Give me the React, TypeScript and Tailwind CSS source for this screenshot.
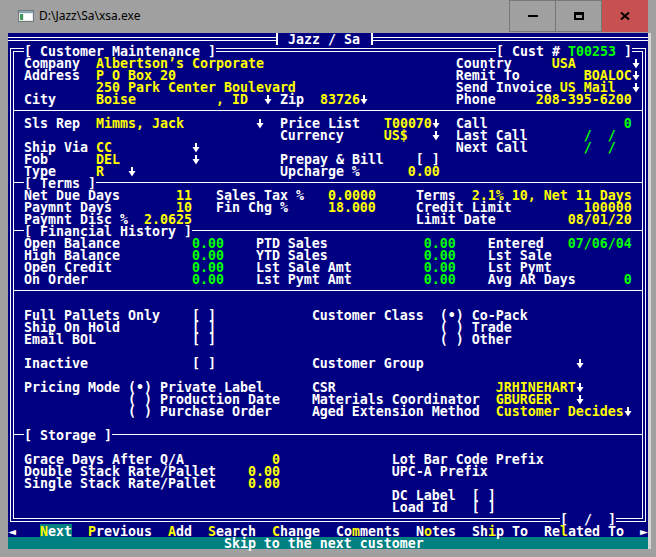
import React from "react";

type C = "w" | "y" | "g";
type Seg = [number, string, C];

const COLOR: Record<C, string> = {
  w: "text-white",
  y: "text-[#ffff00]",
  g: "text-[#00ff00]",
};

function Arrow() {
  return (
    <svg width="8" height="12" viewBox="0 0 8 12" className="inline-block align-top">
      <rect x="3" y="1" width="2" height="6" fill="white" />
      <polygon points="0.5,5 7.5,5 4,10.5" fill="white" />
    </svg>
  );
}

function Line({ segs, start = 1 }: { segs: Seg[]; start?: number }) {
  const out: React.ReactNode[] = [];
  let col = start;
  segs.forEach(([c, t, k], i) => {
    if (c > col) {
      out.push(" ".repeat(c - col));
      col = c;
    }
    if (t === "↓") {
      out.push(<Arrow key={i} />);
    } else {
      out.push(
        <span key={i} className={COLOR[k]}>
          {t}
        </span>
      );
    }
    col += Array.from(t).length;
  });
  return <div className="h-3 whitespace-pre pl-[2px] pt-px leading-[12px]">{out}</div>;
}

function Divider({ label }: { label?: string }) {
  return (
    <div className="flex h-3">
      <div className="mt-[5px] h-px w-[10px] bg-white" />
      {label && <span className="whitespace-pre pt-px leading-[12px] text-white">{label}</span>}
      <div className="mt-[5px] h-px flex-1 bg-white" />
    </div>
  );
}

const Blank = () => <div className="h-3" />;

const rows: (Seg[] | { div: string } | null)[] = [
  [[2, "Company", "w"], [11, "Albertson’s Corporate", "y"], [56, "Country", "w"], [68, "USA", "y"], [78, "↓", "w"]],
  [[2, "Address", "w"], [11, "P O Box 20", "y"], [56, "Remit To", "w"], [72, "BOALOC", "y"], [78, "↓", "w"]],
  [[11, "250 Park Center Boulevard", "y"], [56, "Send Invoice", "w"], [69, "US Mail", "y"], [78, "↓", "w"]],
  [[2, "City", "w"], [11, "Boise", "y"], [26, ", ID", "y"], [32, "↓", "w"], [34, "Zip", "w"], [39, "83726", "y"], [44, "↓", "w"], [56, "Phone", "w"], [66, "208-395-6200", "y"]],
  { div: "" },
  [[2, "Sls Rep", "w"], [11, "Mimms, Jack", "y"], [31, "↓", "w"], [34, "Price List", "w"], [47, "T00070", "y"], [53, "↓", "w"], [56, "Call", "w"], [77, "0", "g"]],
  [[34, "Currency", "w"], [47, "US$", "y"], [53, "↓", "w"], [56, "Last Call", "w"], [72, "/", "g"], [75, "/", "g"]],
  [[2, "Ship Via", "w"], [11, "CC", "y"], [23, "↓", "w"], [56, "Next Call", "w"], [72, "/", "g"], [75, "/", "g"]],
  [[2, "Fob", "w"], [11, "DEL", "y"], [23, "↓", "w"], [34, "Prepay & Bill", "w"], [51, "[ ]", "w"]],
  [[2, "Type", "w"], [11, "R", "y"], [15, "↓", "w"], [34, "Upcharge %", "w"], [50, "0.00", "y"]],
  { div: "[ Terms ]" },
  [[2, "Net Due Days", "w"], [21, "11", "y"], [26, "Sales Tax %", "w"], [40, "0.0000", "y"], [51, "Terms", "w"], [58, "2.1% 10, Net 11 Days", "y"]],
  [[2, "Paymnt Days", "w"], [21, "10", "y"], [26, "Fin Chg %", "w"], [40, "18.000", "y"], [51, "Credit Limit", "w"], [72, "100000", "y"]],
  [[2, "Paymnt Disc %", "w"], [17, "2.0625", "y"], [51, "Limit Date", "w"], [70, "08/01/20", "y"]],
  { div: "[ Financial History ]" },
  [[2, "Open Balance", "w"], [23, "0.00", "g"], [31, "PTD Sales", "w"], [52, "0.00", "g"], [60, "Entered", "w"], [70, "07/06/04", "g"]],
  [[2, "High Balance", "w"], [23, "0.00", "g"], [31, "YTD Sales", "w"], [52, "0.00", "g"], [60, "Lst Sale", "w"]],
  [[2, "Open Credit", "w"], [23, "0.00", "g"], [31, "Lst Sale Amt", "w"], [52, "0.00", "g"], [60, "Lst Pymt", "w"]],
  [[2, "On Order", "w"], [23, "0.00", "g"], [31, "Lst Pymt Amt", "w"], [52, "0.00", "g"], [60, "Avg AR Days", "w"], [77, "0", "g"]],
  { div: "" },
  null,
  [[2, "Full Pallets Only", "w"], [23, "[ ]", "w"], [38, "Customer Class", "w"], [54, "(•) Co-Pack", "w"]],
  [[2, "Ship On Hold", "w"], [23, "[ ]", "w"], [54, "( ) Trade", "w"]],
  [[2, "Email BOL", "w"], [23, "[ ]", "w"], [54, "( ) Other", "w"]],
  null,
  [[2, "Inactive", "w"], [23, "[ ]", "w"], [38, "Customer Group", "w"], [71, "↓", "w"]],
  null,
  [[2, "Pricing Mode", "w"], [15, "(•) Private Label", "w"], [38, "CSR", "w"], [61, "JRHINEHART", "y"], [71, "↓", "w"]],
  [[15, "( ) Production Date", "w"], [38, "Materials Coordinator", "w"], [61, "GBURGER", "y"], [71, "↓", "w"]],
  [[15, "( ) Purchase Order", "w"], [38, "Aged Extension Method", "w"], [61, "Customer Decides", "y"], [77, "↓", "w"]],
  null,
  { div: "[ Storage ]" },
  null,
  [[2, "Grace Days After Q/A", "w"], [33, "0", "y"], [48, "Lot Bar Code Prefix", "w"]],
  [[2, "Double Stack Rate/Pallet", "w"], [30, "0.00", "y"], [48, "UPC-A Prefix", "w"]],
  [[2, "Single Stack Rate/Pallet", "w"], [30, "0.00", "y"]],
  [[48, "DC Label", "w"], [58, "[ ]", "w"]],
  [[48, "Load Id", "w"], [58, "[ ]", "w"]],
];

function DoubleH({ top }: { top: string }) {
  return <div className={`h-[4px] flex-1 border-y border-white ${top}`} />;
}

const Y = "text-[#ffff00]";

export default function App() {
  return (
    <div className="flex h-[557px] w-[656px] flex-col bg-[#a0a0a0] font-['Noto_Sans',sans-serif]">
      {/* title bar */}
      <div className="flex h-[33px] items-start">
        <div className="flex h-[32px] flex-1 items-center pl-[18px]">
          <svg width="16" height="12" viewBox="0 0 16 12" className="mr-[5px]">
            <rect x="0.5" y="0.5" width="15" height="11" fill="#e8e8e8" stroke="#6d7b80" />
            <rect x="1" y="1" width="14" height="2" fill="#8aa4b0" />
            <rect x="2" y="4" width="3" height="6" fill="#3f9a5a" />
            <rect x="6" y="4" width="8" height="6" fill="#ffffff" />
          </svg>
          <span className="text-[12px] leading-none text-black">D:\Jazz\Sa\xsa.exe</span>
        </div>
        <div className="flex h-[32px] w-[47px] items-center justify-center border border-[#777777]">
          <div className="h-[2px] w-[10px] bg-black" />
        </div>
        <div className="flex h-[32px] w-[46px] items-center justify-center border-y border-r border-[#777777]">
          <div className="h-[8px] w-[10px] border-[2px] border-black border-t-[3px]" />
        </div>
        <div className="flex h-[32px] w-[46px] items-center justify-center bg-[#c75050]">
          <svg width="10" height="8" viewBox="0 0 10 8">
            <path d="M1 0.5 L9 7.5 M9 0.5 L1 7.5" stroke="black" strokeWidth="2" />
          </svg>
        </div>
        <div className="w-[8px]" />
      </div>

      <div className="flex">
        {/* console */}
        <div className="ml-[8px] w-[640px] bg-[#000080] text-[13.29px] font-bold text-white font-['DejaVu_Sans_Mono',monospace]">
          {/* row 0 */}
          <div className="flex h-3">
            <div className="mt-[4px] h-[4px] w-[268px] border-y border-white" />
            <div className="h-3 w-[2px] bg-white" />
            <span className="whitespace-pre pl-[10px] pr-[11px] pt-px leading-[12px]">Jazz / Sa</span>
            <div className="h-3 w-[2px] bg-white" />
            <DoubleH top="mt-[4px]" />
          </div>

          {/* row 1 */}
          <div className="flex h-3">
            <div className="h-3 w-4 pl-[2px] pt-[3px]">
              <div className="h-full border-l border-t border-white pl-[2px] pt-[2px]">
                <div className="h-full border-l border-t border-white" />
              </div>
            </div>
            <span className="whitespace-pre pt-px leading-[12px]">[ Customer Maintenance ]</span>
            <DoubleH top="mt-[3px]" />
            <span className="whitespace-pre pt-px leading-[12px]">
              [ Cust # <span className="text-[#00ff00]">T00253</span> ]
            </span>
            <div className="h-3 w-4 pr-[2px] pt-[3px]">
              <div className="h-full border-r border-t border-white pr-[2px] pt-[2px]">
                <div className="h-full border-r border-t border-white" />
              </div>
            </div>
          </div>

          {/* framed body */}
          <div className="mx-[2px] border-x border-white">
            <div className="mx-[2px] border-x border-white">
              {rows.map((r, i) =>
                r === null ? (
                  <Blank key={i} />
                ) : Array.isArray(r) ? (
                  <Line key={i} segs={r} />
                ) : (
                  <Divider key={i} label={r.div || undefined} />
                )
              )}
            </div>
          </div>

          {/* row 40 */}
          <div className="flex h-3">
            <div className="h-3 w-4 pl-[2px]">
              <div className="h-[9px] border-b border-l border-white pb-[2px] pl-[2px]">
                <div className="h-full border-b border-l border-white" />
              </div>
            </div>
            <DoubleH top="mt-[5px]" />
            <span className="whitespace-pre pt-px leading-[12px]">[  /  ]</span>
            <div className="mt-[5px] h-[4px] w-4 border-y border-white" />
            <div className="h-3 w-4 pr-[2px]">
              <div className="h-[9px] border-b border-r border-white pb-[2px] pr-[2px]">
                <div className="h-full border-b border-r border-white" />
              </div>
            </div>
          </div>

          {/* row 41 menu */}
          <div className="h-3 whitespace-pre pt-px leading-[12px]">
            {"◄   "}
            <span className="bg-[#008080]">
              <span className={Y}>N</span>ext
            </span>
            {"  "}
            <span className={Y}>P</span>revious{"  "}
            <span className={Y}>A</span>dd{"  "}
            <span className={Y}>S</span>earch{"  "}
            <span className={Y}>C</span>hange{"  "}
            Co<span className={Y}>m</span>ments{"  "}
            N<span className={Y}>o</span>tes{"  "}
            Sh<span className={Y}>i</span>p To{"  "}
            Re<span className={Y}>l</span>ated To{"  "}►
          </div>

          {/* row 42 status */}
          <div className="h-3 whitespace-pre bg-[#008080] pt-px leading-[12px]">
            {"                           Skip to the next customer"}
          </div>
        </div>
        <div className="w-[3px] bg-[#d6d6d6]" />
      </div>
    </div>
  );
}
